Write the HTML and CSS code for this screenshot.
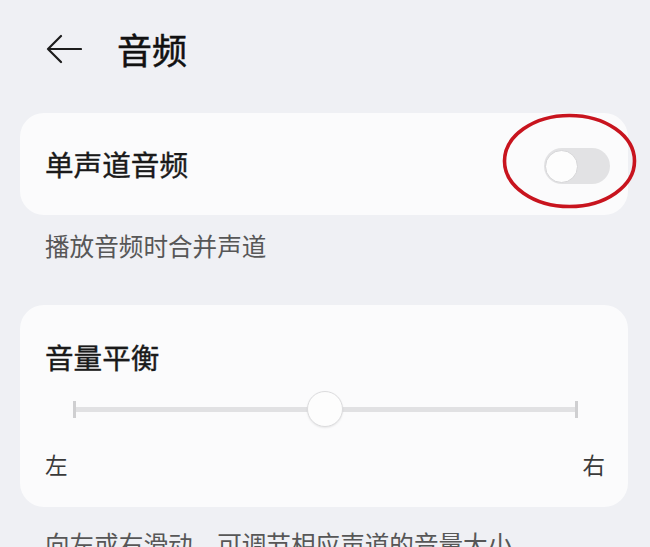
FILE: index.html
```html
<!DOCTYPE html>
<html lang="zh-CN">
<head>
<meta charset="utf-8">
<link rel="stylesheet" href="styles.css">
</head>
<body>
<div class="page">
  <header class="header">
    <svg class="back" width="36" height="30" viewBox="0 0 36 30" aria-hidden="true">
      <path d="M35 15 H2 M15 2 L2 15 L15 28" fill="none" stroke="#1c1c1c" stroke-width="2.2" stroke-linecap="round" stroke-linejoin="round"/>
    </svg>
    <h1 class="title">音频</h1>
  </header>

  <section class="card card-row">
    <span class="row-label">单声道音频</span>
    <span class="toggle"><span class="toggle-thumb"></span></span>
    <svg class="circle-mark" width="135" height="96" viewBox="0 0 135 96" aria-hidden="true">
      <ellipse cx="67.5" cy="48" rx="65" ry="45.5" fill="none" stroke="#c8141e" stroke-width="3.6"/>
    </svg>
  </section>
  <p class="caption">播放音频时合并声道</p>

  <section class="card card-slider">
    <div class="row-label slider-title">音量平衡</div>
    <div class="slider">
      <span class="tick"></span>
      <span class="track"></span>
      <span class="tick"></span>
      <span class="thumb"></span>
    </div>
    <div class="slider-labels">
      <span>左</span>
      <span>右</span>
    </div>
  </section>
  <p class="caption caption-bottom">向左或右滑动，可调节相应声道的音量大小</p>
</div>
</body>
</html>
```

FILE: styles.css
```css
html, body {
  margin: 0;
  padding: 0;
}
body {
  background: #eff0f4;
  font-family: "Noto Sans CJK SC", "Noto Sans", sans-serif;
  color: #1a1a1a;
  width: 650px;
  height: 547px;
  overflow: hidden;
}
.page {
  padding: 0 22px 0 20px;
}
.header {
  height: 98px;
  display: flex;
  align-items: center;
  padding-left: 26px;
}
.back {
  display: block;
  flex: none;
}
.title {
  margin: 0 0 0 35px;
  font-size: 35px;
  font-weight: 400;
  line-height: 40px;
  color: #111;
  -webkit-text-stroke: 0.5px #111;
}
.card {
  background: #fbfbfc;
  border-radius: 24px;
  margin-top: 15px;
}
.card-row {
  position: relative;
  height: 102px;
  display: flex;
  align-items: center;
  justify-content: space-between;
  padding: 0 18px 0 25px;
  box-sizing: border-box;
}
.row-label {
  font-size: 28.6px;
  font-weight: 400;
  line-height: 40px;
  color: #1a1a1a;
  -webkit-text-stroke: 0.4px #1a1a1a;
}
.toggle {
  position: relative;
  width: 66px;
  height: 36px;
  margin-top: 4px;
  border-radius: 18px;
  background: #e2e2e4;
  display: flex;
  align-items: center;
  padding-left: 1px;
  box-sizing: border-box;
}
.toggle-thumb {
  width: 33px;
  height: 33px;
  border-radius: 50%;
  background: #fdfdfd;
  border: 1px solid #d6d6d8;
  box-sizing: border-box;
}
.circle-mark {
  position: absolute;
  left: 482px;
  top: 0;
}
.caption {
  margin: 13px 0 0;
  padding-left: 25px;
  font-size: 24.6px;
  line-height: 34px;
  color: #575757;
}
.card-slider {
  margin-top: 43px;
  padding: 32px 23px 28px 25px;
}
.slider-title {
  line-height: 40px;
}
.slider {
  position: relative;
  height: 64px;
  display: flex;
  align-items: center;
  padding: 0 27px 0 28px;
}
.tick {
  width: 3px;
  height: 17px;
  background: #cfcfd1;
  flex: none;
}
.track {
  flex: 1;
  height: 5px;
  background: #e1e1e3;
}
.thumb {
  position: absolute;
  left: 262px;
  top: 14px;
  width: 36px;
  height: 36px;
  border-radius: 50%;
  background: #fdfdfd;
  border: 1px solid #dcdcde;
  box-shadow: 0 1px 2px rgba(0,0,0,0.08);
  box-sizing: border-box;
}
.slider-labels {
  margin-top: 8px;
  display: flex;
  justify-content: space-between;
  font-size: 22.5px;
  line-height: 30px;
  color: #3a3a3a;
}
.caption-bottom {
  margin-top: 19px;
}
```
